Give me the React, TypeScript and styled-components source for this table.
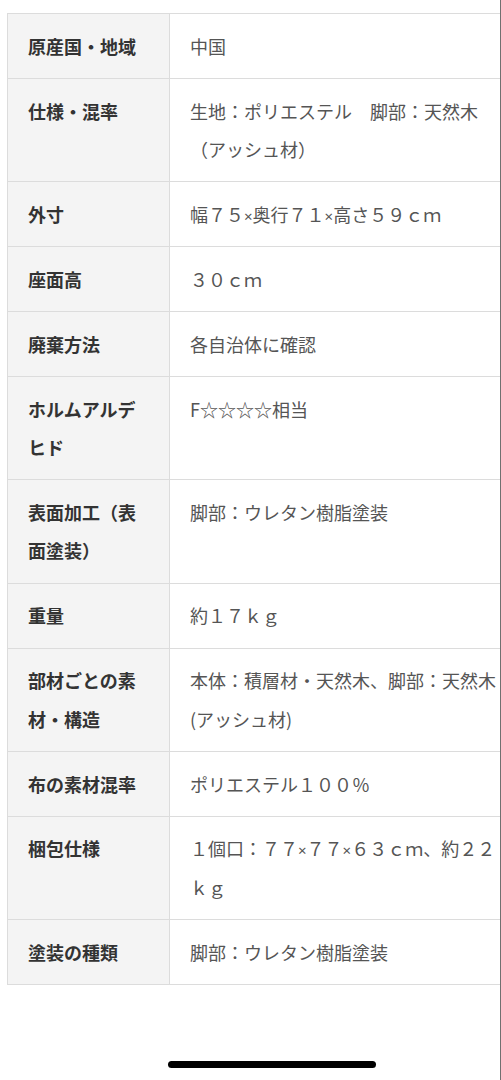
import { Fragment } from "react";
import styled, { createGlobalStyle } from "styled-components";

const GlobalStyle = createGlobalStyle`
  html, body {
    margin: 0;
    padding: 0;
    background: #ffffff;
  }
  body {
    font-family: "Noto Sans CJK JP", "Noto Sans", sans-serif;
  }
`;

const specs: { label: string; value: string }[] = [
  { label: "原産国・地域", value: "中国" },
  { label: "仕様・混率", value: "生地：ポリエステル　脚部：天然木（アッシュ材）" },
  { label: "外寸", value: "幅７５×奥行７１×高さ５９ｃｍ" },
  { label: "座面高", value: "３０ｃｍ" },
  { label: "廃棄方法", value: "各自治体に確認" },
  { label: "ホルムアルデヒド", value: "F☆☆☆☆相当" },
  { label: "表面加工（表面塗装）", value: "脚部：ウレタン樹脂塗装" },
  { label: "重量", value: "約１７ｋｇ" },
  { label: "部材ごとの素材・構造", value: "本体：積層材・天然木、脚部：天然木(アッシュ材)" },
  { label: "布の素材混率", value: "ポリエステル１００％" },
  { label: "梱包仕様", value: "１個口：７７×７７×６３ｃｍ、約２２ｋｇ" },
  { label: "塗装の種類", value: "脚部：ウレタン樹脂塗装" },
];

// the multiplication sign is narrow in the original, not full width
const renderValue = (text: string) =>
  text.split("×").map((part, i) => (
    <Fragment key={i}>
      {i > 0 && <Times>×</Times>}
      {part}
    </Fragment>
  ));

export default function App() {
  return (
    <>
      <GlobalStyle />
      <Page>
        <SpecTable>
          <colgroup>
            <col style={{ width: 162 }} />
            <col />
          </colgroup>
          <tbody>
            {specs.map((row) => (
              <tr key={row.label}>
                <Label>{row.label}</Label>
                <Value>{renderValue(row.value)}</Value>
              </tr>
            ))}
          </tbody>
        </SpecTable>
        <HomeBar />
      </Page>
    </>
  );
}

const HomeBar = styled.div`
  width: 208px;
  height: 7px;
  border-radius: 4px;
  background: #000;
  margin: 76px 0 0 168px;
`;

const Times = styled.span`
  font-family: "Noto Sans", "DejaVu Sans", sans-serif;
  font-size: 15px;
  line-height: 1;
`;

const Value = styled.td`
  background: #ffffff;
  color: #555555;
  font-weight: 400;
`;

const Label = styled.th`
  background: #f4f4f4;
  color: #333333;
  font-weight: 700;
  text-align: left;
`;

const SpecTable = styled.table`
  width: 514px;
  margin: 13px 0 0 7px;
  border-collapse: collapse;
  table-layout: fixed;
  font-size: 18px;
  line-height: 38.5px;

  th,
  td {
    border: 1px solid #dcdcdc;
    padding: 12.7px 20px;
    vertical-align: top;
    word-break: normal;
    line-break: strict;
  }
`;

const Page = styled.div`
  width: 501px;
  height: 1080px;
  box-sizing: border-box;
  border-right: 1px solid #707070;
  overflow: hidden;
`;
